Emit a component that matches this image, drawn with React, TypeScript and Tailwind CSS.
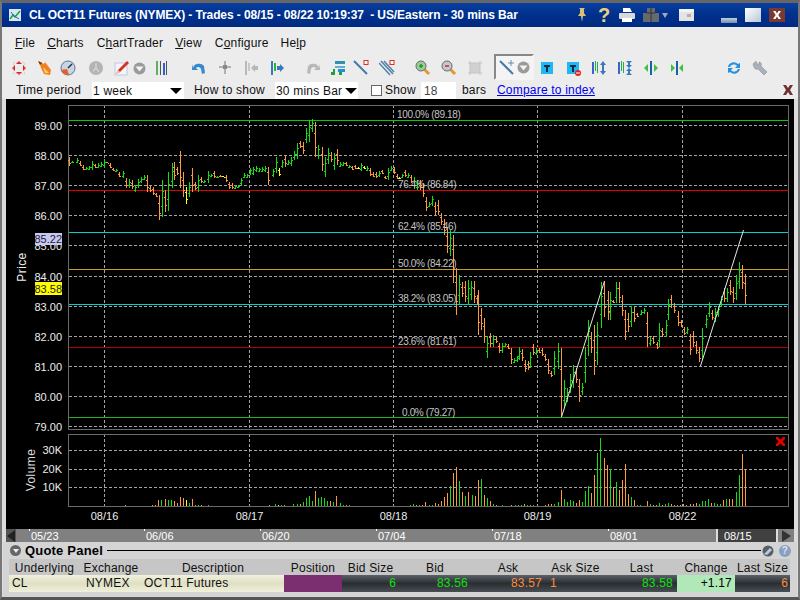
import React from "react";

const O = "#ff9a3c", G = "#10e010", Y = "#ffff20";
type B = [number, number, number, string];
const toBars = (ox: number, oy: number, rows: [number, number, number, string][]): B[] =>
  rows.map(([v, a, b, c]) => [Math.round(ox + v / 3), Math.round(oy + a / 3), Math.round(oy + b / 3), c]);

const seg1 = toBars(0, 100, [[207,170,197,O],[216,184,190,G],[230,175,188,G],[239,183,197,O],[248,195,210,O],[257,200,210,G],[266,197,210,G],[275,182,210,G],[284,192,203,O],[293,190,203,G],[302,185,200,G],[311,177,205,G],[320,185,190,O],[329,188,205,O],[338,203,213,O],[347,208,217,G],[356,215,232,O],[368,213,235,G],[378,235,265,O],[386,238,265,G],[395,240,268,O],[404,255,275,G],[413,237,265,G],[422,230,250,G],[431,225,240,G],[440,225,275,O],[449,258,275,O],[458,262,285,O],[467,280,292,O],[476,285,360,O],[485,240,352,G],[495,270,335,O],[505,215,333,G],[515,190,265,G],[523,185,240,O],[532,200,225,O],[541,153,263,O],[550,215,290,O],[559,262,312,Y],[568,247,290,G],[577,205,275,O],[586,247,270,O],[595,225,275,G],[604,230,250,O],[613,240,248,G],[625,213,248,G],[634,222,232,G],[643,213,233,O],[652,228,233,G],[661,225,232,O],[670,228,232,Y],[679,224,247,O],[688,245,268,O],[697,250,268,O],[706,255,268,G],[715,255,265,G],[724,235,255,G],[733,218,235,G],[742,222,233,G],[751,205,225,G],[760,200,225,G],[769,198,215,G],[778,205,215,G],[787,200,215,G],[796,198,215,G],[805,200,255,O]]);
const seg2 = toBars(270, 100, [[8,207,230,G],[17,170,220,G],[26,205,228,Y],[35,180,205,G],[44,165,200,O],[53,180,195,G],[62,172,198,G],[71,152,180,G],[82,130,178,G],[91,122,145,O],[100,125,162,O],[109,85,130,G],[118,60,125,G],[127,57,95,G],[136,65,172,O],[145,135,178,G],[155,140,212,O],[164,170,230,G],[173,145,192,G],[182,155,185,O],[191,160,210,G],[200,148,195,O],[210,185,200,G],[219,187,197,G],[228,187,198,O],[237,195,205,G],[246,198,210,O],[255,195,208,O],[264,202,208,Y],[273,190,213,G],[282,198,208,Y],[291,197,213,G],[300,205,228,O],[309,215,230,O],[318,217,235,O],[327,212,230,G],[336,210,222,O],[345,228,238,O],[354,205,240,G],[363,198,212,G],[372,200,222,O],[381,222,238,O],[386,230,238,Y],[395,222,235,G],[404,210,230,O],[413,220,235,G],[422,225,250,O],[431,230,268,G],[440,240,270,G],[449,240,270,O],[458,250,292,O],[467,290,332,O],[476,305,322,G],[485,288,318,G],[494,305,345,O],[503,300,345,O],[512,340,375,O],[521,358,405,O],[532,385,460,O],[541,390,468,G],[550,405,550,O]]);
const seg3: B[] = [[456,268,315,O],[459,275,304,G],[462,282,297,O],[465,281,302,O],[468,280,305,G],[471,281,300,G],[474,281,303,O],[477,295,305,O],[478,290,335,O]];
const seg4 = toBars(270, 290, [[634,55,120,O],[643,85,160,O],[652,137,203,G],[661,130,172,O],[670,135,172,G],[679,140,160,O],[688,160,188,O],[697,160,188,G],[706,160,170,G],[715,162,178,O],[724,175,222,O],[733,205,220,G],[742,198,217,G],[746,170,210,G],[755,178,212,O],[764,210,245,O],[773,212,240,O]]);
const seg5 = toBars(530, 220, [[0,395,445,G],[10,372,405,O],[18,385,405,G],[28,385,400,O],[37,383,408,O],[45,403,422,O],[54,418,463,O],[64,453,472,O],[73,393,465,G],[85,370,447,G],[94,385,590,O],[103,480,565,G],[112,505,545,G],[121,462,520,G],[130,435,505,G],[139,445,490,O],[148,477,545,O],[157,490,525,G],[166,380,490,G],[175,300,408,G],[184,335,400,O],[193,315,465,O],[202,305,435,G],[212,187,325,G],[221,185,292,O],[233,212,300,O],[241,215,300,G],[250,240,250,O],[259,187,248,G],[268,187,250,O],[277,225,288,O],[286,270,360,O],[295,280,335,O],[304,258,320,G],[313,262,305,O],[322,280,290,O],[332,270,285,G],[342,265,283,G],[352,275,380,O],[361,350,378,G],[370,348,372,O],[380,367,387,O],[388,310,380,G],[397,325,352,O],[407,300,350,G],[415,238,300,G],[424,225,265,O],[433,248,278,O],[445,272,318,O],[453,300,322,O],[463,320,345,O],[472,320,343,G],[481,342,405,O],[490,334,380,O],[499,362,403,O],[508,380,425,O],[517,325,420,G],[527,285,325,G],[536,247,290,G],[545,270,300,O],[554,265,305,G],[563,258,290,G],[572,228,260,G],[581,205,245,O],[590,203,245,G],[599,180,225,O],[608,200,248,O],[617,165,240,G],[628,127,207,G],[637,135,207,O],[646,162,253,O]]);
const bars: B[] = [...seg1, ...seg2, ...seg3, ...seg4, ...seg5];

const volA: [number, number, string][] = [[376,255,O],[457,255,O],[466,256,O],[475,240,O],[484,240,G],[496,237,O],[505,240,G],[514,240,G],[523,243,O],[532,250,O],[541,231,O],[550,234,O],[559,240,Y],[568,249,G],[577,237,O],[586,255,O],[595,255,G],[604,255,O],[625,255,G],[808,255,O],[826,252,G],[835,255,Y],[844,255,G],[853,255,O],[880,252,G],[892,252,G],[901,252,O],[910,246,G],[919,234,G],[928,228,G],[937,243,G],[946,213,O],[955,234,G],[964,231,G],[973,234,G],[982,243,G],[991,243,O],[1000,246,G],[1009,228,O],[1021,249,G],[1030,255,G],[1039,255,O],[1048,255,G]];
const volB: [number, number, string][] = [[31,255,G],[40,252,G],[49,255,O],[58,255,G],[67,255,O],[76,246,O],[87,255,G],[96,255,G],[106,249,O],[115,252,O],[124,243,O],[133,231,O],[142,219,O],[151,198,G],[160,159,O],[169,141,O],[178,183,G],[187,216,O],[196,228,G],[205,216,O],[217,225,G],[226,228,O],[235,180,O],[244,177,G],[253,225,O],[262,234,G],[271,243,O],[280,252,G],[289,255,O],[307,255,G],[334,255,O],[346,255,G],[355,255,G],[364,255,G],[373,252,O],[382,255,G],[391,255,O],[400,255,G],[436,255,O],[445,252,O],[454,252,O],[463,252,G],[475,246,G],[484,210,O],[493,237,G],[502,246,G],[511,240,G],[520,243,G],[529,249,O],[538,240,O],[547,246,G],[556,213,G],[565,198,G],[574,219,O],[583,165,O],[592,99,G],[601,54,G],[613,114,O],[622,135,O],[631,147,G],[640,201,O],[649,186,G],[658,210,O],[667,180,O],[676,132,O],[685,222,O],[694,231,G],[703,240,O],[712,255,G],[721,255,G],[742,243,O],[751,252,G],[760,255,O],[769,255,O],[778,249,G],[787,255,O],[796,252,G],[805,249,G],[814,252,O],[823,255,O],[832,255,O],[841,255,O],[850,252,O],[859,255,O],[871,252,O],[880,252,O],[889,249,O],[898,252,G],[907,243,G],[916,243,G],[925,237,G],[934,249,O],[943,249,G],[952,252,G],[961,252,G],[970,240,O],[979,237,G],[988,237,O],[997,237,O],[1009,216,G],[1018,165,G],[1027,102,O],[1036,147,O]];
const vols: [number, number, string][] = [
  ...volA.map(([v, t, c]) => [Math.round(v / 3), Math.round(420 + t / 3), c] as [number, number, string]),
  ...volB.map(([v, t, c]) => [Math.round(400 + v / 3), Math.round(420 + t / 3), c] as [number, number, string]),
];

const vGrid = [104.5, 249.5, 393.5, 537.5, 682.5];
const prices = ["89.00", "88.00", "87.00", "86.00", "85.00", "84.00", "83.00", "82.00", "81.00", "80.00", "79.00"];
const priceY = (i: number) => Math.round(125 + i * 30.1) + 0.5;
const fibs: [number, number, string][] = [
  [397, 118, "100.0% (89.18)"], [398, 188, "76.4% (86.84)"], [398, 230, "62.4% (85.46)"], [398, 267, "50.0% (84.22)"],
  [398, 302, "38.2% (83.05)"], [398, 345, "23.6% (81.61)"], [402, 416, "0.0% (79.27)"],
];
const levels: [number, string][] = [[120.5, "#00d000"], [190.5, "#e00000"], [232.5, "#00d0d0"], [269.5, "#c89a28"], [304.5, "#00d0d0"], [347.5, "#b00000"], [417.5, "#20b020"]];

function Chart() {
  return (
    <svg width="788" height="430" viewBox="6 99 788 430" className="block" fontFamily="'Liberation Sans', sans-serif" letterSpacing="0">
      <rect x="6" y="99" width="788" height="430" fill="#000" />
      <g shapeRendering="crispEdges" stroke="#a4a4a4" strokeDasharray="3 2">
        {prices.map((_, i) => <line key={i} x1="69" x2="788" y1={priceY(i)} y2={priceY(i)} />)}
        {vGrid.map((x) => <line key={x} x1={x} x2={x} y1="105" y2="429" />)}
        {vGrid.map((x) => <line key={"v" + x} x1={x} x2={x} y1="434" y2="506" />)}
        {[450.5, 469.5, 487.5].map((y) => <line key={y} x1="69" x2="788" y1={y} y2={y} />)}
      </g>
      <g shapeRendering="crispEdges" fill="none" stroke="#6a6a6a">
        <rect x="68.5" y="105.5" width="720" height="324" />
        <rect x="68.5" y="434.5" width="720" height="72" />
      </g>
      <g shapeRendering="crispEdges">
        {levels.map(([y, c]) => <line key={y} x1="69" x2="788" y1={y} y2={y} stroke={c} />)}
        {bars.map(([x, t, b, c], i) => {
          const up = c === G;
          const o = Math.round(t + (b - t) * (up ? 0.7 : 0.3));
          const cl = Math.round(t + (b - t) * (up ? 0.3 : 0.7));
          return (
            <g key={i} fill={c}>
              <rect x={x} y={t} width="1" height={Math.max(b - t, 1)} />
              <rect x={x - 1} y={o} width="1" height="1" />
              <rect x={x + 1} y={cl} width="1" height="1" />
            </g>
          );
        })}
        {vols.map(([x, t, c], i) => <rect key={i} x={x} y={t} width="1" height={506 - t} fill={c} />)}
      </g>
      <line x1="561.5" y1="417" x2="604.5" y2="281" stroke="#e8e8e8" />
      <line x1="700.5" y1="366" x2="743.5" y2="230" stroke="#e8e8e8" />
      <g fontSize="10" fill="#c4c4c4" letterSpacing="-0.35">
        {fibs.map(([x, y, t]) => <text key={t} x={x} y={y}>{t}</text>)}
      </g>
      <g fontSize="11" fill="#eee" textAnchor="end">
        {prices.map((p, i) => <text key={p} x="62" y={priceY(i) + 4}>{p}</text>)}
        <text x="62" y="454">30K</text>
        <text x="62" y="473">20K</text>
        <text x="62" y="491">10K</text>
      </g>
      <rect x="35" y="233" width="27" height="12" fill="#c8c8f4" />
      <text x="62" y="243" fontSize="11" fill="#223" textAnchor="end">85.22</text>
      <rect x="35" y="282" width="27" height="13" fill="#ffff00" />
      <text x="62" y="293" fontSize="11" fill="#222" textAnchor="end">83.58</text>
      <text transform="translate(26 267) rotate(-90)" fontSize="12" fill="#eee" textAnchor="middle" letterSpacing="0.4">Price</text>
      <text transform="translate(35 470) rotate(-90)" fontSize="12" fill="#ddd" textAnchor="middle" letterSpacing="0.4">Volume</text>
      <g fontSize="11" fill="#eee" textAnchor="middle">
        {["08/16", "08/17", "08/18", "08/19", "08/22"].map((d, i) => <text key={d} x={vGrid[i]} y="520">{d}</text>)}
      </g>
      <path d="M776 437l2 0 2.500 2.500 2.500-2.500 2 0 0 2-2.500 2.500 2.500 2.500 0 2-2 0-2.500-2.500-2.500 2.500-2 0 0-2 2.500-2.500-2.500-2.500z" fill="#e00000" />
    </svg>
  );
}

const Svg = ({ w = 16, h = 16, children, className = "" }: { w?: number; h?: number; children: React.ReactNode; className?: string }) => (
  <svg width={w} height={h} viewBox={`0 0 ${w} ${h}`} className={`block shrink-0 ${className}`}>{children}</svg>
);

const DropCircle = () => (
  <Svg w={13} h={13}>
    <circle cx="6.500" cy="6.500" r="6" fill="#9a9a9a" />
    <path d="M2.500 4.500h8l-4 5z" fill="#f4f4f4" />
  </Svg>
);
const Cross = () => (
  <Svg>
    <path d="M8 1l3 3H5zM8 15l-3-3h6zM1 8l3-3v6zM15 8l-3 3V5z" fill="#e02020" />
    <rect x="2.500" y="2.500" width="11" height="11" fill="none" stroke="#bbb" strokeDasharray="1 2" />
  </Svg>
);
const Flame = () => (
  <Svg>
    <path d="M2 1l5 3 1-2 6 8-1 5-6-1-3-6z" fill="#f08020" />
    <path d="M6 7l6 6-4 0z" fill="#fdd060" />
    <path d="M1 1l4 2-2 2z" fill="#703010" />
  </Svg>
);
const Gauge = () => (
  <Svg>
    <circle cx="8" cy="8" r="7" fill="#c8d4e0" stroke="#5878a0" />
    <path d="M1 10a7 7 0 0 0 8 5l-2-6z" fill="#e06030" />
    <path d="M8 8l4-4" stroke="#203050" strokeWidth="1.500" />
  </Svg>
);
const GrayClock = () => (
  <Svg>
    <circle cx="8" cy="8" r="7" fill="#b4b4b4" />
    <path d="M8 3v5l3 4M8 8l-3 3" stroke="#dadada" strokeWidth="1.200" fill="none" />
  </Svg>
);
const Pencil = () => (
  <Svg>
    <rect x="1" y="3" width="12" height="12" fill="#f4f4fa" stroke="#c0c8e0" />
    <path d="M2 14l2-4 9-9 2 2-9 9z" fill="#d83020" />
    <path d="M2 14l2-4 2 2z" fill="#f0d0a0" />
  </Svg>
);
const Lines = ({ a = "#60b060", b = "#3060d0", c = "#555" }) => (
  <Svg w={13} h={16}>
    <rect x="1" y="1" width="2" height="14" fill={a} />
    <rect x="5" y="1" width="1" height="14" fill={c} />
    <rect x="8" y="3" width="2" height="12" fill={b} />
    <rect x="11" y="1" width="1" height="14" fill={c} />
  </Svg>
);
const Undo = ({ flip = false, c = "#3888d0" }: { flip?: boolean; c?: string }) => (
  <Svg className={flip ? "-scale-x-100" : ""}>
    <path d="M2 8a6 5 0 0 1 11 -2l1 7-3 1-1-5a3 3 0 0 0-5-1l2 2H1V4z" fill={c} />
  </Svg>
);
const PlusGray = () => (
  <Svg>
    <path d="M7 1h2v5h5v2H9v6H7V8H2V6h5z" fill="#b0b0b0" />
    <rect x="6" y="5" width="4" height="4" fill="#888" />
  </Svg>
);
const BarArrow = ({ dir, a, b }: { dir: "l" | "r"; a: string; b: string }) => (
  <Svg>
    <rect x="2" y="1" width="2" height="14" fill={a} />
    <rect x="5" y="3" width="2" height="8" fill={b} />
    {dir === "l" ? <path d="M8 8l4-4v2h3v4h-3v2z" fill={a} /> : <path d="M15 8l-4-4v2H8v4h3v2z" fill={a} />}
  </Svg>
);
const TradeChart = () => (
  <Svg>
    <rect x="5" y="1" width="10" height="3" fill="#3090b0" />
    <rect x="5" y="6" width="10" height="2" fill="#60b0d0" />
    <rect x="8" y="9" width="7" height="3" fill="#2090d0" />
    <path d="M1 15v-3h2v-3h2v6zM9 15V12h3v3z" fill="#20a040" />
  </Svg>
);
const LineTool = () => (
  <Svg>
    <path d="M1 1l13 13" stroke="#4878a8" strokeWidth="2" />
    <rect x="11" y="0.500" width="4" height="4" fill="#fff" stroke="#d83020" />
  </Svg>
);
const Hatched = () => (
  <Svg>
    <path d="M0 3l11 12M2 1l12 13M5 1l10 11" stroke="#5080a8" strokeWidth="1.500" />
    <rect x="11" y="0.500" width="4" height="4" fill="#fff" stroke="#d83020" />
  </Svg>
);
const Mag = ({ plus }: { plus: boolean }) => (
  <Svg>
    <path d="M8 8l6 6" stroke="#e09830" strokeWidth="3" />
    <circle cx="6" cy="6" r="5" fill={plus ? "#a0c8a0" : "#c0c8d8"} stroke="#607060" />
    <path d={plus ? "M4 6h4M6 4v4" : "M4 6h4"} stroke={plus ? "#10a020" : "#e02020"} strokeWidth="1.500" />
  </Svg>
);
const GrayBox = () => (
  <Svg>
    <rect x="3" y="3" width="10" height="10" fill="#d0d0d0" />
    <path d="M1 3h14M1 13h14M3 1v14M13 1v14" stroke="#c4c4c4" />
  </Svg>
);
const TIcon = ({ stop = false }: { stop?: boolean }) => (
  <Svg>
    <rect x="1" y="2" width="12" height="12" fill="#20b8f0" />
    <path d="M4 5h6v2H8v5H6V7H4z" fill="#0a3050" />
    {stop && <circle cx="12" cy="13" r="3" fill="#e02020" />}
    {stop && <rect x="10" y="12.500" width="4" height="1" fill="#fff" />}
  </Svg>
);
const VArrows = ({ out }: { out: boolean }) => (
  <Svg>
    <rect x="1" y="2" width="2" height="12" fill="#4060d0" />
    <rect x="4" y="1" width="1" height="10" fill="#20b040" />
    <rect x="6" y="2" width="1" height="11" fill="#20b040" />
    <path d={out ? "M12 1l3 4h-2v6h2l-3 4-3-4h2V5H9z" : "M9 1h6l-2 2v2h2l-3 3-3-3h2V3zM12 8l3 3h-2v2l2 2H9l2-2v-2H9z"} fill="#3878c0" />
  </Svg>
);
const HArrows = ({ out }: { out: boolean }) => (
  <Svg>
    <rect x="7" y="1" width="2" height="14" fill="#1860a8" />
    <path d={out ? "M1 8l4-4v8zM15 8l-4-4v8z" : "M6 8L2 4v8zM10 8l4-4v8z"} fill="#40c040" />
  </Svg>
);
const Refresh = () => (
  <Svg>
    <path d="M2 7a6 6 0 0 1 10-3l2-1v5H9l2-2a4 4 0 0 0-7 1zM14 9a6 6 0 0 1-10 3l-2 1V8h5l-2 2a4 4 0 0 0 7-1z" fill="#2890e0" />
  </Svg>
);
const Wrench = () => (
  <Svg>
    <path d="M1 4l3-3 1 3 2 0 0-2c2 0 3 2 2 4l6 6-3 3-6-6c-2 1-4 0-5-5z" fill="#a8b0b8" stroke="#80888f" strokeWidth="0.500" />
  </Svg>
);

const Mn = ({ pre = "", u, post }: { pre?: string; u: string; post: string }) => (
  <span>{pre}<span className="underline">{u}</span>{post}</span>
);

const CaretDown = () => <span className="block w-0 h-0 border-x-[6px] border-x-transparent border-t-[6px] border-t-black" />;

const Tick = () => <span className="absolute left-[-2px] top-0 w-[1px] h-[2px] bg-white" />;

const headers = ["Underlying", "Exchange", "Description", "Position", "Bid Size", "Bid", "Ask", "Ask Size", "Last", "Change", "Last Size"];
const cols = "grid grid-cols-[71px_62px_142px_58px_57px_72px_74px_61px_71px_58px_55px]";

export default function App() {
  return (
    <div className="w-[800px] h-[600px] overflow-hidden flex flex-col bg-[#dcdcdc] border-t-[3px] border-b-[3px] border-x-2 border-x-[#777] border-t-[#666] border-b-[#555] text-[12px] tracking-[0.2px] text-[#111] font-['Liberation_Sans',sans-serif]">
      {/* title */}
      <div className="h-[24px] shrink-0 flex items-center bg-linear-to-b from-[#0a3fa0] via-[#00308c] to-[#002a80] text-white font-bold tracking-[-0.1px] pl-[7px]">
        <Svg w={12} h={12}>
          <rect x="0" y="0" width="12" height="12" fill="#d8e8f0" />
          <path d="M1 10l3-4 2 2 5-6" stroke="#20a040" strokeWidth="1.500" fill="none" />
          <path d="M2 3l3 4 5 3" stroke="#3060c0" fill="none" />
        </Svg>
        <span className="ml-[8px] whitespace-pre w-[490px] shrink-0 text-[12px]">CL OCT11 Futures (NYMEX) - Trades - 08/15 - 08/22 10:19:37  - US/Eastern - 30 mins Bar</span>
        <div className="flex items-center ml-[55px]">
          <Svg>
            <path d="M5 1h6l-1 1v4l2 3H9l-1 6-1-6H4l2-3V2z" fill="#d8c078" />
          </Svg>
          <span className="ml-[8px] text-[20px] leading-none font-bold text-[#e8d080] w-[13px]">?</span>
          <span className="ml-[8px]">
            <Svg>
              <path d="M4 1h7l2 4H4z" fill="#fff" />
              <rect x="0" y="6" width="16" height="6" rx="1" fill="#d8d8d8" />
              <rect x="3" y="11" width="10" height="4" fill="#fff" />
            </Svg>
          </span>
          <span className="ml-[8px]">
            <Svg>
              <path d="M4 1h8v5h4v9H0V6h4z" fill="#666a6c" />
              <path d="M8 1v5M8 6v9M4 6h8" stroke="#333" />
            </Svg>
          </span>
          <span className="ml-[3px] w-0 h-0 border-x-[3px] border-x-transparent border-t-[5px] border-t-[#a0a8b8]" />
          <span className="ml-[11px] block w-[15px] h-[12px] bg-[#e4e4e4] border-t-[3px] border-[#f4f4f4]"><span className="block ml-[8px] mt-[2px] w-[4px] h-[3px] bg-[#b0b0b0]" /></span>
          <span className="ml-[27px] mt-[10px] block w-[16px] h-[5px] bg-linear-to-b from-[#c0d0e0] to-[#7090b0]" />
          <span className="ml-[8px] block w-[16px] h-[14px] bg-linear-to-br from-[#ffffff] to-[#b8c8d8]" />
          <span className="ml-[8px] flex items-center justify-center w-[16px] h-[14px] bg-[#7a3a32]">
            <Svg w={10} h={10}><path d="M1 1h2.500L5 3.500 6.500 1H9L6.300 5 9 9H6.500L5 6.500 3.500 9H1l2.700-4z" fill="#fff" /></Svg>
          </span>
        </div>
      </div>
      {/* menu */}
      <div className="h-[27px] shrink-0 bg-[#ececec] flex items-center pl-[13px] pt-[4px]">
        <Mn u="F" post="ile" />
        <span className="ml-[12px]"><Mn u="C" post="harts" /></span>
        <span className="ml-[13px]"><Mn pre="C" u="h" post="artTrader" /></span>
        <span className="ml-[12px]"><Mn u="V" post="iew" /></span>
        <span className="ml-[13px]"><Mn pre="C" u="o" post="nfigure" /></span>
        <span className="ml-[12px]"><Mn pre="He" u="l" post="p" /></span>
      </div>
      {/* toolbar */}
      <div className="h-[26px] shrink-0 bg-[#ececec] flex items-center pl-[9px] pt-[2px]">
        <Cross />
        <span className="ml-[10px]"><Flame /></span>
        <span className="ml-[7px]"><Gauge /></span>
        <span className="ml-[12px]"><GrayClock /></span>
        <span className="ml-[10px]"><Pencil /></span>
        <span className="ml-[3px]"><DropCircle /></span>
        <span className="ml-[9px]"><Lines /></span>
        <span className="ml-[23px]"><Undo /></span>
        <span className="ml-[10px]"><PlusGray /></span>
        <span className="ml-[10px]"><BarArrow dir="l" a="#b8b8b8" b="#c8c8c8" /></span>
        <span className="ml-[10px]"><BarArrow dir="r" a="#3878c0" b="#30b040" /></span>
        <span className="ml-[20px]"><Undo flip c="#b8b8b8" /></span>
        <span className="ml-[9px]"><TradeChart /></span>
        <span className="ml-[7px]"><LineTool /></span>
        <span className="ml-[10px]"><Hatched /></span>
        <span className="ml-[20px]"><Mag plus /></span>
        <span className="ml-[10px]"><Mag plus={false} /></span>
        <span className="ml-[10px]"><GrayBox /></span>
        <span className="ml-[11px] -mt-[2px] flex items-center h-[26px] w-[40px] bg-[#f4f4f4] border-2 border-[#888] border-r-[#f4f4f4] border-b-[#f4f4f4] pl-[3px]">
          <Svg>
            <path d="M1 2l13 13" stroke="#4878a8" strokeWidth="2" />
            <path d="M12 1v6M9 4h6" stroke="#6090b8" />
          </Svg>
          <span className="ml-[2px]"><DropCircle /></span>
        </span>
        <span className="ml-[6px]"><TIcon /></span>
        <span className="ml-[10px]"><TIcon stop /></span>
        <span className="ml-[9px]"><VArrows out /></span>
        <span className="ml-[10px]"><VArrows out={false} /></span>
        <span className="ml-[10px]"><HArrows out /></span>
        <span className="ml-[10px]"><HArrows out={false} /></span>
        <span className="ml-[41px]"><Refresh /></span>
        <span className="ml-[10px]"><Wrench /></span>
      </div>
      {/* options */}
      <div className="h-[19px] shrink-0 bg-[#ececec] flex items-end pl-[14px] leading-[18px] whitespace-nowrap">
        <span className="w-[76px]">Time period</span>
        <div className="w-[92px] h-[17px] bg-white flex items-center justify-between pl-[1px] pr-[2px]"><span>1 week</span><CaretDown /></div>
        <span className="ml-[10px] w-[81px]">How to show</span>
        <div className="w-[83px] h-[17px] bg-white flex items-center justify-between pl-[1px] pr-[1px]"><span>30 mins Bar</span><CaretDown /></div>
        <span className="ml-[13px] mb-[3px] block w-[11px] h-[11px] bg-white border border-[#666]" />
        <span className="ml-[3px] w-[36px]">Show</span>
        <div className="w-[35px] h-[17px] bg-white flex items-center pl-[3px] text-[#444]">18</div>
        <span className="ml-[6px] w-[35px]">bars</span>
        <span className="text-[#0000ee] underline w-[102px]">Compare to index</span>
        <span className="ml-auto mr-[4px] mb-[3px]">
          <Svg w={12} h={12}><path d="M1 1h3l2 3 2-3h3L8 6l3 5H8L6 8l-2 3H1l3-5z" fill="#703030" /></Svg>
        </span>
      </div>
      {/* chart */}
      <div className="h-[430px] shrink-0 overflow-hidden ml-[4px] mr-[4px] w-[788px]"><Chart /></div>
      {/* scroller */}
      <div className="h-[13px] shrink-0 ml-[4px] mr-[4px] bg-[#808080] flex text-white text-[11px] leading-[14px] tracking-[0px]">
        <span className="w-[10px] h-[13px] flex items-center justify-center bg-[#555]">
          <span className="block w-0 h-0 border-y-[6px] border-y-transparent border-r-[8px] border-r-[#222]" />
        </span>
        <span className="ml-[15px] w-[115px] relative"><Tick />05/23</span>
        <span className="w-[116px] relative"><Tick />06/06</span>
        <span className="w-[116px] relative"><Tick />06/20</span>
        <span className="w-[116px] relative"><Tick />07/04</span>
        <span className="w-[116px] relative"><Tick />07/18</span>
        <span className="w-[106px] relative"><Tick />08/01</span>
        <span className="pl-[6px] w-[62px] bg-[#404040] border-x-2 border-x-[#ddd]">08/15</span>
        <span className="ml-[4px] block mt-[1px] w-0 h-0 border-y-[6px] border-y-transparent border-l-[9px] border-l-[#333]" />
      </div>
      {/* quote panel */}
      <div className="flex-1 ml-[1px] mr-[1px] bg-[#d4d4d4] flex flex-col">
        <div className="h-[17px] flex items-center pl-[7px] pr-[6px]">
          <span className="flex items-center justify-center w-[11px] h-[11px] rounded-full bg-[#666]">
            <span className="block w-0 h-0 border-x-[3px] border-x-transparent border-t-[4px] border-t-[#eee]" />
          </span>
          <span className="ml-[4px] font-bold text-[13px] tracking-[0.2px] text-black">Quote Panel</span>
          <span className="ml-[4px] flex-1 h-[1px] bg-black" />
          <span className="ml-[1px]">
            <Svg w={12} h={12}><circle cx="6" cy="6" r="5.500" fill="#55606a" /><path d="M2 9l6-6 2 2-5 5z" fill="#c0c8d0" /></Svg>
          </span>
          <span className="ml-[5px] flex items-center justify-center w-[12px] h-[12px] rounded-full bg-[#8aa0c0] text-[10px] leading-none font-bold text-[#dde4f0]">?</span>
        </div>
        <div className="ml-[6px] flex flex-col w-[781px]">
          <div className={`${cols} h-[16px] bg-[#c6c6c6] items-center text-center whitespace-nowrap`}>
            {headers.map((h) => <span key={h}>{h}</span>)}
          </div>
          <div className={`${cols} h-[17px] ring-1 ring-inset ring-[#778] items-center whitespace-nowrap leading-[16px]`}>
            <span className="h-full pl-[3px] bg-linear-to-b from-[#f0f0dc] via-[#e0e0c4] to-[#f0f0dc]">CL</span>
            <span className="h-full pl-[6px] bg-linear-to-b from-[#f0f0dc] via-[#e0e0c4] to-[#f0f0dc]">NYMEX</span>
            <span className="h-full pl-[2px] bg-linear-to-b from-[#f0f0dc] via-[#e0e0c4] to-[#f0f0dc]">OCT11 Futures</span>
            <span className="h-full bg-[#7b2f70]" />
            <span className="h-full pr-[3px] text-right text-[#10e010] bg-linear-to-b from-[#5a626a] via-[#2a2e32] to-[#484e54]">6</span>
            <span className="h-full pr-[3px] text-right text-[#10e010] bg-linear-to-b from-[#5a626a] via-[#2a2e32] to-[#484e54]">83.56</span>
            <span className="h-full pr-[3px] text-right text-[#ff8c3c] bg-linear-to-b from-[#5a626a] via-[#2a2e32] to-[#484e54]">83.57</span>
            <span className="h-full pl-[5px] text-[#ff8c3c] bg-linear-to-b from-[#5a626a] via-[#2a2e32] to-[#484e54]">1</span>
            <span className="h-full pr-[4px] text-right text-[#10e010] bg-linear-to-b from-[#5a626a] via-[#2a2e32] to-[#484e54]">83.58</span>
            <span className="h-full pr-[3px] text-right text-black bg-[#b0e8b8]">+1.17</span>
            <span className="h-full pr-[2px] text-right text-[#ff8c3c] bg-linear-to-b from-[#5a626a] via-[#2a2e32] to-[#484e54]">6</span>
          </div>
        </div>
      </div>
    </div>
  );
}
